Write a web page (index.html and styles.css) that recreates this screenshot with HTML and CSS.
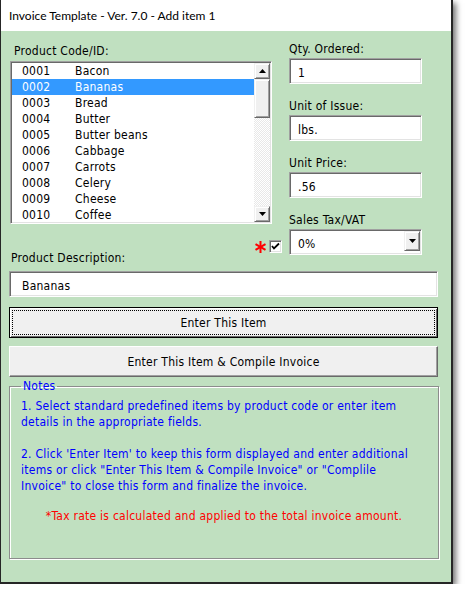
FILE: index.html
```html
<!DOCTYPE html>
<html>
<head>
<meta charset="utf-8">
<link rel="stylesheet" href="styles.css">
</head>
<body>
<div class="window">
  <div class="titlebar">Invoice Template - Ver. 7.0 - Add item 1</div>
  <div class="client">
    <div class="top">
      <div class="leftcol">
        <div class="label code-label">Product Code/ID:</div>
        <div class="listbox sunken">
          <div class="items">
            <div class="row"><span class="code">0001</span><span>Bacon</span></div>
            <div class="row selected"><span class="code">0002</span><span>Bananas</span></div>
            <div class="row"><span class="code">0003</span><span>Bread</span></div>
            <div class="row"><span class="code">0004</span><span>Butter</span></div>
            <div class="row"><span class="code">0005</span><span>Butter beans</span></div>
            <div class="row"><span class="code">0006</span><span>Cabbage</span></div>
            <div class="row"><span class="code">0007</span><span>Carrots</span></div>
            <div class="row"><span class="code">0008</span><span>Celery</span></div>
            <div class="row"><span class="code">0009</span><span>Cheese</span></div>
            <div class="row"><span class="code">0010</span><span>Coffee</span></div>
          </div>
          <div class="vscroll">
            <div class="sbtn raised"><svg width="7" height="4" viewBox="0 0 7 4"><path d="M3.5 0 L7 4 L0 4 Z" fill="#000"/></svg></div>
            <div class="thumb raised"></div>
            <div class="track"></div>
            <div class="sbtn raised"><svg width="7" height="4" viewBox="0 0 7 4"><path d="M0 0 L7 0 L3.5 4 Z" fill="#000"/></svg></div>
          </div>
        </div>
        <div class="checkrow">
          <svg class="asterisk" width="11" height="12" viewBox="0 0 11 12">
            <g stroke="#f00" stroke-width="2" stroke-linecap="butt">
              <line x1="5.5" y1="0" x2="5.5" y2="12"/>
              <line x1="0.5" y1="3.2" x2="10.5" y2="8.8"/>
              <line x1="0.5" y1="8.8" x2="10.5" y2="3.2"/>
            </g>
          </svg>
          <div class="checkbox sunken">
            <svg width="9" height="9" viewBox="0 0 9 9"><path d="M1 4 L3 6.5 L8 1.5" fill="none" stroke="#000" stroke-width="1.8"/></svg>
          </div>
        </div>
      </div>
      <div class="rightcol">
        <div class="field">
          <div class="label">Qty. Ordered:</div>
          <div class="input sunken small">1</div>
        </div>
        <div class="field">
          <div class="label">Unit of Issue:</div>
          <div class="input sunken small">lbs.</div>
        </div>
        <div class="field">
          <div class="label">Unit Price:</div>
          <div class="input sunken small">.56</div>
        </div>
        <div class="field">
          <div class="label">Sales Tax/VAT</div>
          <div class="input sunken small combo">
            <span class="combo-text">0%</span>
            <span class="dropbtn raised"><svg width="7" height="4" viewBox="0 0 7 4"><path d="M0 0 L7 0 L3.5 4 Z" fill="#000"/></svg></span>
          </div>
        </div>
      </div>
    </div>
    <div class="label desc-label">Product Description:</div>
    <div class="input sunken wide">Bananas</div>
    <div class="button default">Enter This Item</div>
    <div class="button raised-btn">Enter This Item &amp; Compile Invoice</div>
    <fieldset class="notes">
      <legend>Notes</legend>
      <p class="note">1. Select standard predefined items by product code or enter item<br>details in the appropriate fields.</p>
      <p class="note">2. Click 'Enter Item' to keep this form displayed and enter additional<br>items or click "Enter This Item &amp; Compile Invoice" or "Complile<br>Invoice" to close this form and finalize the invoice.</p>
      <p class="tax">*Tax rate is calculated and applied to the total invoice amount.</p>
    </fieldset>
  </div>
</div>
</body>
</html>
```
FILE: styles.css
```css
body {
  margin: 0;
  background: #ffffff;
}

.window {
  width: 453px;
  height: 584px;
  box-sizing: border-box;
  border: 1px solid #262626;
  border-top: none;
  border-right-width: 2px;
  border-bottom-width: 2px;
  box-shadow: 3px 3px 6px rgba(0, 0, 0, 0.55);
  display: flex;
  flex-direction: column;
}

.titlebar {
  height: 31px;
  flex: none;
  background: #ffffff;
  padding-left: 8px;
  font: 12px Lato, "Open Sans", sans-serif;
  line-height: 31px;
  color: #000;
}

.client {
  flex: 1;
  background: #c0e0c0;
  padding: 11px 0 0 8px;
  font: 12px "DejaVu Sans Condensed", "DejaVu Sans", sans-serif;
  letter-spacing: 0.25px;
  color: #000;
}

.top {
  display: flex;
  align-items: flex-start;
  gap: 7px;
}

.leftcol {
  width: 273px;
  display: flex;
  flex-direction: column;
}

.label {
  height: 15px;
  line-height: 15px;
  white-space: nowrap;
}

.code-label {
  margin-top: 2px;
  margin-left: 5px;
}

.sunken {
  box-sizing: border-box;
  background: #ffffff;
  border-style: solid;
  border-width: 1px;
  border-color: #a0a0a0 #ffffff #ffffff #a0a0a0;
  box-shadow: inset 1px 1px 0 #696969, inset -1px -1px 0 #e3e3e3;
}

.raised {
  box-sizing: border-box;
  background: #f0f0f0;
  border-style: solid;
  border-width: 1px;
  border-color: #f0f0f0 #696969 #696969 #f0f0f0;
  box-shadow: inset 1px 1px 0 #ffffff, inset -1px -1px 0 #a0a0a0;
}

.listbox {
  margin-top: 2px;
  margin-left: 1px;
  width: 262px;
  height: 163px;
  padding: 1px;
  display: flex;
  overflow: hidden;
}

.items {
  width: 242px;
  flex: none;
  overflow: hidden;
}

.row {
  height: 16px;
  line-height: 16px;
  padding-left: 10px;
  display: flex;
  white-space: nowrap;
  color: #000;
}

.row.selected {
  background: #3399ff;
  color: #ffffff;
}

.code {
  width: 53px;
  flex: none;
}

.vscroll {
  width: 16px;
  flex: none;
  display: flex;
  flex-direction: column;
}

.sbtn {
  width: 16px;
  height: 16px;
  flex: none;
  display: flex;
  align-items: center;
  justify-content: center;
}

.thumb {
  width: 16px;
  height: 39px;
  flex: none;
}

.track {
  flex: 1;
  background: repeating-conic-gradient(#e8e8e8 0 25%, #ffffff 0 50%) 0 0 / 2px 2px;
}

.checkrow {
  margin-top: 16px;
  height: 13px;
  display: flex;
  justify-content: flex-end;
  align-items: flex-start;
  gap: 3px;
}

.asterisk {
  margin-top: 1px;
}

.checkbox {
  width: 13px;
  height: 13px;
  display: flex;
  align-items: center;
  justify-content: center;
}

.rightcol {
  width: 133px;
  display: flex;
  flex-direction: column;
  gap: 15px;
}

.field {
  display: flex;
  flex-direction: column;
  gap: 1px;
}

.input {
  height: 26px;
  line-height: 24px;
  padding-top: 2px;
  white-space: nowrap;
}

.input.small {
  width: 133px;
  padding-left: 8px;
}

.combo {
  display: flex;
  align-items: flex-start;
  padding-right: 1px;
}

.combo-text {
  flex: 1;
}

.dropbtn {
  width: 16px;
  height: 20px;
  margin-top: -1px;
  display: flex;
  align-items: center;
  justify-content: center;
}

.desc-label {
  margin-top: -4px;
  padding-left: 2px;
}

.input.wide {
  margin-top: 5px;
  width: 429px;
  padding-left: 12px;
}

.button {
  box-sizing: border-box;
  width: 429px;
  height: 31px;
  display: flex;
  align-items: center;
  justify-content: center;
  background: #f0f0f0;
  white-space: nowrap;
}

.button.default {
  margin-top: 10px;
  border: 1px solid #000000;
  box-shadow: inset 1px 1px 0 #ffffff, inset -1px -1px 0 #696969;
  outline: 1px dotted #000000;
  outline-offset: -4px;
}

.button.raised-btn {
  margin-top: 8px;
  border-style: solid;
  border-width: 1px;
  border-color: #ffffff #696969 #696969 #ffffff;
  box-shadow: inset -1px -1px 0 #a0a0a0;
}

.notes {
  box-sizing: border-box;
  margin: 2px 0 0 0;
  width: 430px;
  height: 180px;
  padding: 0 0 0 11px;
  border: 1px solid #8c8c8c;
  box-shadow: 1px 1px 0 #ffffff, inset 1px 1px 0 #ffffff;
  color: #0000ff;
  min-width: 0;
}

.notes legend {
  padding: 0 2px;
  line-height: 15px;
  color: #0000ff;
}

.note {
  margin: 4px 0 16px 0;
  line-height: 16px;
  white-space: nowrap;
}

.note + .note {
  margin-top: 0;
  margin-bottom: 14px;
}

.tax {
  margin: 0;
  padding-right: 11px;
  line-height: 16px;
  text-align: center;
  color: #ff0000;
  white-space: nowrap;
}
```
